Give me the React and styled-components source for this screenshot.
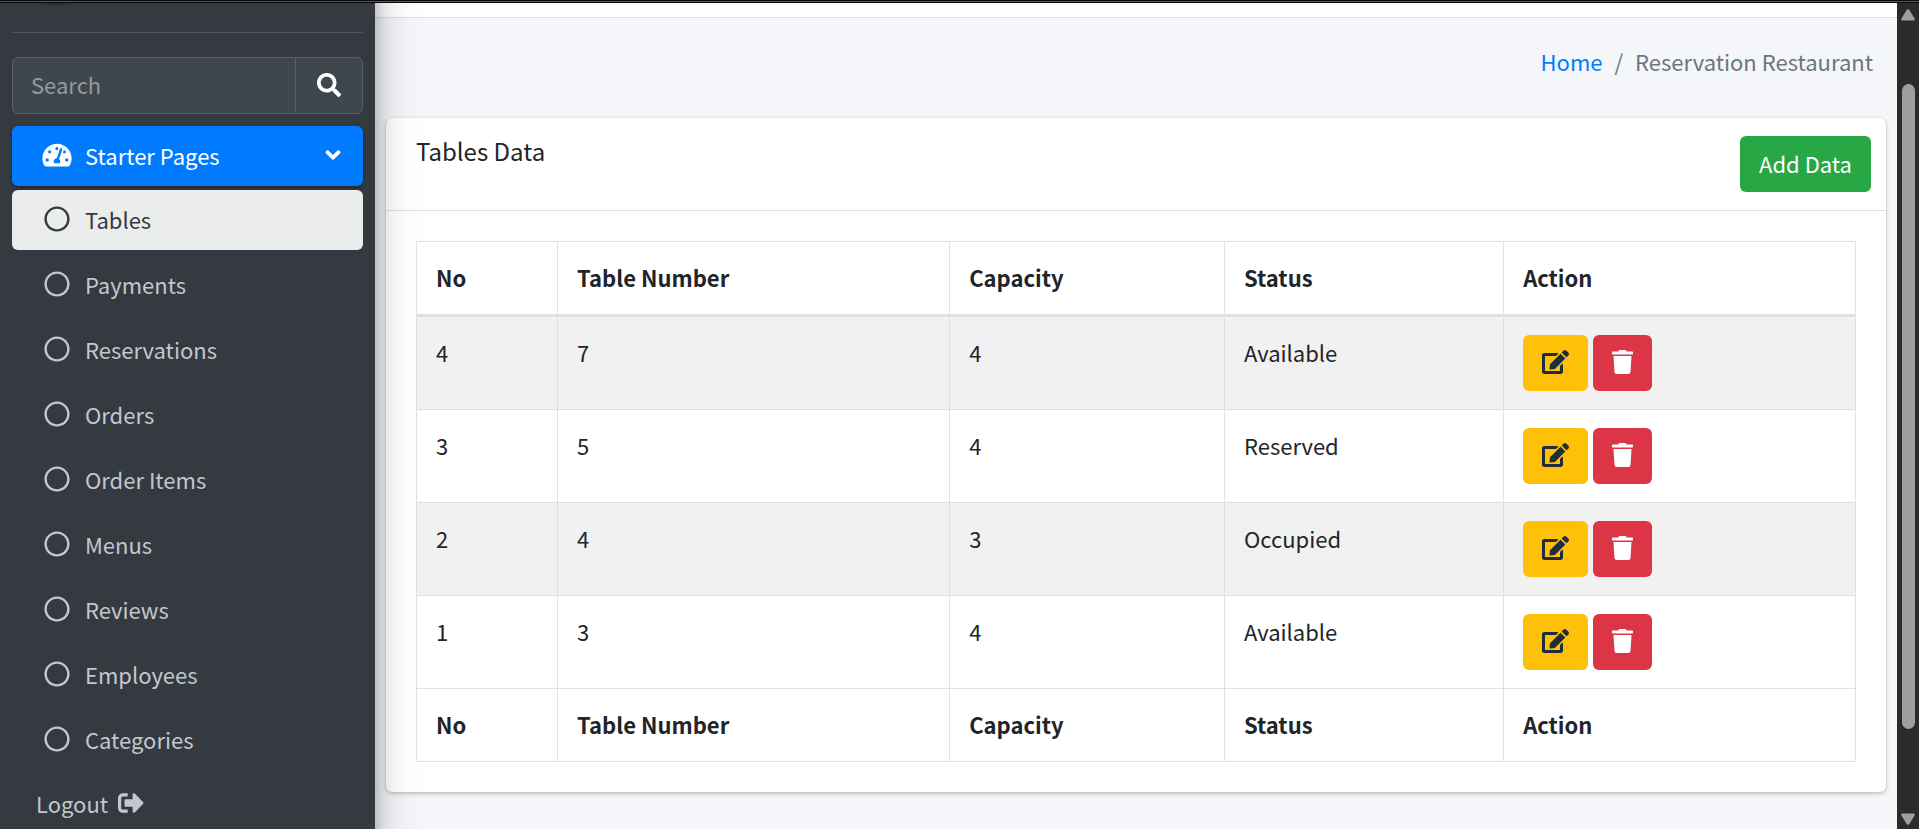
import React from "react";
import styled, { createGlobalStyle } from "styled-components";
import {
  FaAngleDown,
  FaEdit,
  FaRegCircle,
  FaSearch,
  FaSignOutAlt,
  FaTachometerAlt,
  FaTrash,
} from "react-icons/fa";

const GlobalStyle = createGlobalStyle`
  *, *::before, *::after { box-sizing: border-box; }
  body {
    margin: 0;
    overflow: hidden;
    font-family: "Noto Sans CJK SC", "Noto Sans", sans-serif;
    font-size: 22px;
    line-height: 36px;
    color: #212529;
    background: #f4f6f9;
  }
  button, input { font: inherit; }
  a { text-decoration: none; }
`;

const Window = styled.div`
  display: flex;
  flex-direction: column;
  height: 100vh;
`;

const WindowEdge = styled.div`
  flex: none;
  height: 3px;
  background: #5b5862;
  border-top: 1px solid #08070c;
  border-bottom: 1px solid #08070c;
`;

const Shell = styled.div`
  flex: 1;
  min-height: 0;
  display: flex;
  overflow: hidden;
`;

const Sidebar = styled.aside`
  flex: none;
  width: 375px;
  padding: 0 12px;
  position: relative;
  z-index: 1;
  color: #c2c7d0;

  &::before {
    content: "";
    position: absolute;
    inset: -60px 0;
    z-index: -1;
    background: #343a40;
    box-shadow: 0 21px 42px rgba(0, 0, 0, 0.25), 0 15px 15px rgba(0, 0, 0, 0.22);
  }
`;

const UserPanel = styled.div`
  height: 30px;
  margin-bottom: 24px;
  border-bottom: 1px solid #4f5962;
  background: radial-gradient(ellipse 20px 4px at 44px 0, #24282c, transparent);
`;

const SearchForm = styled.form`
  display: flex;
  height: 57px;
  margin-bottom: 12px;
  border: 1px solid #56606a;
  border-radius: 6px;
  background: #3f474e;
  overflow: hidden;
`;

const SearchInput = styled.input`
  flex: 1;
  min-width: 0;
  padding: 0 18px 3px;
  border: 0;
  outline: 0;
  background: transparent;
  color: #fff;

  &::placeholder {
    color: #939ba2;
    opacity: 1;
  }
`;

const SearchButton = styled.button`
  display: flex;
  align-items: center;
  justify-content: center;
  width: 67px;
  padding: 0 0 2px;
  border: 0;
  border-left: 1px solid #56606a;
  background: transparent;
  color: #fff;

  svg {
    width: 24px;
    height: 24px;
  }
`;

const NavList = styled.ul`
  display: flex;
  flex-direction: column;
  gap: 5px;
  margin: 0 0 4px;
  padding: 0;
  list-style: none;
`;

const variants = {
  plain: "color: #c2c7d0;",
  primary: `
    color: #fff;
    background: #007bff;
    box-shadow: 0 2px 5px rgba(0, 0, 0, 0.12), 0 2px 3px rgba(0, 0, 0, 0.24);
  `,
  current: `
    color: #343a40;
    background: #ebecec;
  `,
};

const NavLink = styled.a`
  display: flex;
  align-items: center;
  height: 60px;
  padding: 0 24px 3px;
  border-radius: 6px;
  ${({ $variant = "plain" }) => variants[$variant]}
`;

const ParentLink = styled(NavLink)`
  margin-bottom: 4px;
`;

const NavIcon = styled.span`
  display: flex;
  justify-content: center;
  width: 41px;
  margin-right: 8px;

  svg {
    width: 30px;
    height: 26px;
  }
`;

const Caret = styled(FaAngleDown)`
  margin-left: auto;
  margin-right: -6px;
  height: 24px;
  width: 24px;
`;

const LogoutLink = styled(NavLink)`
  gap: 10px;

  svg {
    width: 26px;
    height: 26px;
  }
`;

const Content = styled.main`
  flex: 1;
  min-width: 0;
  background: #f4f6f9;
`;

const Navbar = styled.div`
  height: 15px;
  background: #fff;
  border-bottom: 1px solid #dee2e6;
`;

const Breadcrumb = styled.ol`
  display: flex;
  justify-content: flex-end;
  margin: 0;
  padding: 25px 24px 39px;
  list-style: none;
  color: #6c757d;

  li + li::before {
    content: "/";
    padding: 0 12px;
  }

  a {
    color: #007bff;
  }
`;

const Card = styled.section`
  margin: 0 11px;
  border-radius: 6px;
  background: #fff;
  box-shadow: 0 0 2px rgba(0, 0, 0, 0.125), 0 2px 4px rgba(0, 0, 0, 0.2);
`;

const CardHeader = styled.header`
  display: flex;
  align-items: flex-start;
  justify-content: space-between;
  padding: 18px 15px 18px 30px;
  border-bottom: 1px solid #dfdfdf;
`;

const CardTitle = styled.h3`
  margin: 0;
  font-size: 24px;
  font-weight: 400;
  line-height: 30px;
`;

const buttonColours = {
  success: "background: #28a745; color: #fff;",
  warning: "background: #ffc107; color: #1f2d3d;",
  danger: "background: #dc3545; color: #fff;",
};

const Button = styled.button`
  display: flex;
  align-items: center;
  height: 56px;
  padding: 0 19px 2px;
  border: 0;
  border-radius: 6px;
  ${({ $colour }) => buttonColours[$colour]}
`;

const EditIcon = styled(FaEdit)`
  width: 27px;
  height: 24px;
`;

const TrashIcon = styled(FaTrash)`
  width: 21px;
  height: 24px;
`;

const CardBody = styled.div`
  padding: 30px;
`;

const Table = styled.table`
  width: 100%;
  table-layout: fixed;
  border-collapse: collapse;

  th, td {
    padding: 17px 18px 19px 19px;
    border: 1px solid #dee2e6;
    text-align: left;
    vertical-align: top;
  }

  td:last-child {
    padding: 18px 18px 18px 19px;
  }

  thead th {
    border-bottom-width: 3px;
  }

  tbody tr:nth-child(odd) {
    background: #f1f1f1;
  }
`;

const Column = styled.col`
  width: ${({ $share }) => $share}%;
`;

const Actions = styled.div`
  display: flex;
  gap: 5px;
`;

const Scrollbar = styled.div`
  flex: none;
  display: flex;
  flex-direction: column;
  align-items: center;
  width: 22px;
  padding: 6px 0 4px;
  background: #2b2b2b;

  svg {
    flex: none;
    display: block;
    fill: #9f9f9f;
  }
`;

const Track = styled.div`
  flex: 1;
  display: flex;
  flex-direction: column;
  align-self: stretch;
  padding: 63px 4px 84px 5px;
`;

const Thumb = styled.div`
  flex: 1;
  border-radius: 7px;
  background: #9f9f9f;
`;

const pages = [
  "Tables",
  "Payments",
  "Reservations",
  "Orders",
  "Order Items",
  "Menus",
  "Reviews",
  "Employees",
  "Categories",
];

const columns = [
  { label: "No", share: 9.8 },
  { label: "Table Number", share: 27.25 },
  { label: "Capacity", share: 19.1 },
  { label: "Status", share: 19.4 },
  { label: "Action", share: 24.45 },
];

const tables = [
  { no: 4, number: 7, capacity: 4, status: "Available" },
  { no: 3, number: 5, capacity: 4, status: "Reserved" },
  { no: 2, number: 4, capacity: 3, status: "Occupied" },
  { no: 1, number: 3, capacity: 4, status: "Available" },
];

function HeadingRow() {
  return (
    <tr>
      {columns.map(({ label }) => (
        <th key={label} scope="col">
          {label}
        </th>
      ))}
    </tr>
  );
}

function SideNavigation() {
  return (
    <Sidebar>
      <UserPanel />
      <SearchForm role="search">
        <SearchInput type="search" placeholder="Search" aria-label="Search" />
        <SearchButton type="button" aria-label="Run search">
          <FaSearch />
        </SearchButton>
      </SearchForm>
      <nav>
        <ParentLink href="#" $variant="primary">
          <NavIcon>
            <FaTachometerAlt />
          </NavIcon>
          Starter Pages
          <Caret />
        </ParentLink>
        <NavList>
          {pages.map((page, index) => (
            <li key={page}>
              <NavLink href="#" $variant={index === 0 ? "current" : "plain"}>
                <NavIcon>
                  <FaRegCircle />
                </NavIcon>
                {page}
              </NavLink>
            </li>
          ))}
        </NavList>
        <LogoutLink href="#">
          Logout
          <FaSignOutAlt />
        </LogoutLink>
      </nav>
    </Sidebar>
  );
}

function TablesCard() {
  return (
    <Card>
      <CardHeader>
        <CardTitle>Tables Data</CardTitle>
        <Button type="button" $colour="success">
          Add Data
        </Button>
      </CardHeader>
      <CardBody>
        <Table>
          <colgroup>
            {columns.map(({ label, share }) => (
              <Column key={label} $share={share} />
            ))}
          </colgroup>
          <thead>
            <HeadingRow />
          </thead>
          <tbody>
            {tables.map((row) => (
              <tr key={row.no}>
                <td>{row.no}</td>
                <td>{row.number}</td>
                <td>{row.capacity}</td>
                <td>{row.status}</td>
                <td>
                  <Actions>
                    <Button type="button" $colour="warning" aria-label="Edit">
                      <EditIcon />
                    </Button>
                    <Button type="button" $colour="danger" aria-label="Delete">
                      <TrashIcon />
                    </Button>
                  </Actions>
                </td>
              </tr>
            ))}
          </tbody>
          <tfoot>
            <HeadingRow />
          </tfoot>
        </Table>
      </CardBody>
    </Card>
  );
}

export default function App() {
  return (
    <>
      <GlobalStyle />
      <Window>
        <WindowEdge />
        <Shell>
          <SideNavigation />
          <Content>
            <Navbar />
            <Breadcrumb>
              <li>
                <a href="#">Home</a>
              </li>
              <li>Reservation Restaurant</li>
            </Breadcrumb>
            <TablesCard />
          </Content>
          <Scrollbar aria-hidden="true">
            <svg width="14" height="12" viewBox="0 0 14 12">
              <path d="M5.5 1.2Q7 -.6 8.5 1.2L13.6 9.4Q14.4 11.6 12.5 11.6H1.5Q-.4 11.6.4 9.4Z" />
            </svg>
            <Track>
              <Thumb />
            </Track>
            <svg width="14" height="12" viewBox="0 0 14 12">
              <path d="M5.5 10.8Q7 12.6 8.5 10.8L13.6 2.6Q14.4.4 12.5.4H1.5Q-.4.4.4 2.6Z" />
            </svg>
          </Scrollbar>
        </Shell>
      </Window>
    </>
  );
}
